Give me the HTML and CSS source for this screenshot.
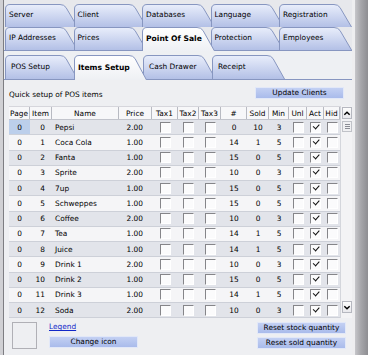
FILE: index.html
```html
<!DOCTYPE html>
<html>
<head>
<meta charset="utf-8">
<link rel="stylesheet" href="styles.css">
</head>
<body>
<svg class="defs" width="0" height="0" aria-hidden="true">
  <defs>
    <linearGradient id="tabg" x1="0" y1="0" x2="0" y2="1">
      <stop offset="0" stop-color="#e9eefb"/>
      <stop offset="1" stop-color="#b3c0e6"/>
    </linearGradient>
    <linearGradient id="tabsel" x1="0" y1="0" x2="0" y2="1">
      <stop offset="0" stop-color="#ffffff"/>
      <stop offset="1" stop-color="#eef0f4"/>
    </linearGradient>
  </defs>
</svg>
<div class="window">
  <div class="main">
    <div class="tabrow">
      <div class="tab"><svg viewBox="0 0 73 23" preserveAspectRatio="none"><path d="M0.5 23 V5 Q0.5 0.5 5 0.5 H55 Q59 0.5 61 3.5 L72.5 23"/></svg><span>Server</span></div>
      <div class="tab"><svg viewBox="0 0 73 23" preserveAspectRatio="none"><path d="M0.5 23 V5 Q0.5 0.5 5 0.5 H55 Q59 0.5 61 3.5 L72.5 23"/></svg><span>Client</span></div>
      <div class="tab"><svg viewBox="0 0 73 23" preserveAspectRatio="none"><path d="M0.5 23 V5 Q0.5 0.5 5 0.5 H55 Q59 0.5 61 3.5 L72.5 23"/></svg><span>Databases</span></div>
      <div class="tab"><svg viewBox="0 0 73 23" preserveAspectRatio="none"><path d="M0.5 23 V5 Q0.5 0.5 5 0.5 H55 Q59 0.5 61 3.5 L72.5 23"/></svg><span>Language</span></div>
      <div class="tab"><svg viewBox="0 0 73 23" preserveAspectRatio="none"><path d="M0.5 23 V5 Q0.5 0.5 5 0.5 H55 Q59 0.5 61 3.5 L72.5 23"/></svg><span>Registration</span></div>
    </div>
    <div class="tabrow">
      <div class="tab"><svg viewBox="0 0 73 23" preserveAspectRatio="none"><path d="M0.5 23 V5 Q0.5 0.5 5 0.5 H55 Q59 0.5 61 3.5 L72.5 23"/></svg><span>IP Addresses</span></div>
      <div class="tab"><svg viewBox="0 0 73 23" preserveAspectRatio="none"><path d="M0.5 23 V5 Q0.5 0.5 5 0.5 H55 Q59 0.5 61 3.5 L72.5 23"/></svg><span>Prices</span></div>
      <div class="tab sel"><svg viewBox="0 0 73 24" preserveAspectRatio="none"><path d="M0.5 24 V5 Q0.5 0.5 5 0.5 H55 Q59 0.5 61 3.5 L72.5 24"/></svg><span>Point Of Sale</span></div>
      <div class="tab"><svg viewBox="0 0 73 23" preserveAspectRatio="none"><path d="M0.5 23 V5 Q0.5 0.5 5 0.5 H55 Q59 0.5 61 3.5 L72.5 23"/></svg><span>Protection</span></div>
      <div class="tab"><svg viewBox="0 0 73 23" preserveAspectRatio="none"><path d="M0.5 23 V5 Q0.5 0.5 5 0.5 H55 Q59 0.5 61 3.5 L72.5 23"/></svg><span>Employees</span></div>
    </div>
    <div class="panel">
      <div class="tabrow sub">
        <div class="tab"><svg viewBox="0 0 73 24" preserveAspectRatio="none"><path d="M0.5 24 V5 Q0.5 0.5 5 0.5 H55 Q59 0.5 61 3.5 L72.5 24"/></svg><span>POS Setup</span></div>
        <div class="tab sel"><svg viewBox="0 0 73 25" preserveAspectRatio="none"><path d="M0.5 25 V5 Q0.5 0.5 5 0.5 H55 Q59 0.5 61 3.5 L72.5 25"/></svg><span>Items Setup</span></div>
        <div class="tab"><svg viewBox="0 0 73 24" preserveAspectRatio="none"><path d="M0.5 24 V5 Q0.5 0.5 5 0.5 H55 Q59 0.5 61 3.5 L72.5 24"/></svg><span>Cash Drawer</span></div>
        <div class="tab"><svg viewBox="0 0 73 24" preserveAspectRatio="none"><path d="M0.5 24 V5 Q0.5 0.5 5 0.5 H55 Q59 0.5 61 3.5 L72.5 24"/></svg><span>Receipt</span></div>
      </div>
      <div class="content">
        <div class="toolbar">
          <span class="title">Quick setup of POS items</span>
          <button class="btn update">Update Clients</button>
        </div>
        <div class="grid">
          <div class="cols">
            <div class="row head">
              <div>Page</div><div>Item</div><div>Name</div><div>Price</div><div>Tax1</div><div>Tax2</div><div>Tax3</div><div>#</div><div>Sold</div><div>Min</div><div>Unl</div><div>Act</div><div>Hid</div>
            </div>
            <div class="row even"><div class="c cur">0</div><div class="r">0</div><div class="l">Pepsi</div><div class="p">2.00</div><div class="k"><span class="cb"></span></div><div class="k"><span class="cb"></span></div><div class="k"><span class="cb"></span></div><div class="c">0</div><div class="c">10</div><div class="c">3</div><div class="k"><span class="cb"></span></div><div class="k"><span class="cb on"></span></div><div class="k"><span class="cb"></span></div></div>
            <div class="row odd"><div class="c">0</div><div class="r">1</div><div class="l">Coca Cola</div><div class="p">1.00</div><div class="k"><span class="cb"></span></div><div class="k"><span class="cb"></span></div><div class="k"><span class="cb"></span></div><div class="c">14</div><div class="c">1</div><div class="c">5</div><div class="k"><span class="cb"></span></div><div class="k"><span class="cb on"></span></div><div class="k"><span class="cb"></span></div></div>
            <div class="row even"><div class="c">0</div><div class="r">2</div><div class="l">Fanta</div><div class="p">1.00</div><div class="k"><span class="cb"></span></div><div class="k"><span class="cb"></span></div><div class="k"><span class="cb"></span></div><div class="c">15</div><div class="c">0</div><div class="c">5</div><div class="k"><span class="cb"></span></div><div class="k"><span class="cb on"></span></div><div class="k"><span class="cb"></span></div></div>
            <div class="row odd"><div class="c">0</div><div class="r">3</div><div class="l">Sprite</div><div class="p">2.00</div><div class="k"><span class="cb"></span></div><div class="k"><span class="cb"></span></div><div class="k"><span class="cb"></span></div><div class="c">10</div><div class="c">0</div><div class="c">3</div><div class="k"><span class="cb"></span></div><div class="k"><span class="cb on"></span></div><div class="k"><span class="cb"></span></div></div>
            <div class="row even"><div class="c">0</div><div class="r">4</div><div class="l">7up</div><div class="p">1.00</div><div class="k"><span class="cb"></span></div><div class="k"><span class="cb"></span></div><div class="k"><span class="cb"></span></div><div class="c">15</div><div class="c">0</div><div class="c">5</div><div class="k"><span class="cb"></span></div><div class="k"><span class="cb on"></span></div><div class="k"><span class="cb"></span></div></div>
            <div class="row odd"><div class="c">0</div><div class="r">5</div><div class="l">Schweppes</div><div class="p">1.00</div><div class="k"><span class="cb"></span></div><div class="k"><span class="cb"></span></div><div class="k"><span class="cb"></span></div><div class="c">15</div><div class="c">0</div><div class="c">5</div><div class="k"><span class="cb"></span></div><div class="k"><span class="cb on"></span></div><div class="k"><span class="cb"></span></div></div>
            <div class="row even"><div class="c">0</div><div class="r">6</div><div class="l">Coffee</div><div class="p">2.00</div><div class="k"><span class="cb"></span></div><div class="k"><span class="cb"></span></div><div class="k"><span class="cb"></span></div><div class="c">10</div><div class="c">0</div><div class="c">3</div><div class="k"><span class="cb"></span></div><div class="k"><span class="cb on"></span></div><div class="k"><span class="cb"></span></div></div>
            <div class="row odd"><div class="c">0</div><div class="r">7</div><div class="l">Tea</div><div class="p">1.00</div><div class="k"><span class="cb"></span></div><div class="k"><span class="cb"></span></div><div class="k"><span class="cb"></span></div><div class="c">14</div><div class="c">1</div><div class="c">5</div><div class="k"><span class="cb"></span></div><div class="k"><span class="cb on"></span></div><div class="k"><span class="cb"></span></div></div>
            <div class="row even"><div class="c">0</div><div class="r">8</div><div class="l">Juice</div><div class="p">1.00</div><div class="k"><span class="cb"></span></div><div class="k"><span class="cb"></span></div><div class="k"><span class="cb"></span></div><div class="c">14</div><div class="c">1</div><div class="c">5</div><div class="k"><span class="cb"></span></div><div class="k"><span class="cb on"></span></div><div class="k"><span class="cb"></span></div></div>
            <div class="row odd"><div class="c">0</div><div class="r">9</div><div class="l">Drink 1</div><div class="p">2.00</div><div class="k"><span class="cb"></span></div><div class="k"><span class="cb"></span></div><div class="k"><span class="cb"></span></div><div class="c">10</div><div class="c">0</div><div class="c">3</div><div class="k"><span class="cb"></span></div><div class="k"><span class="cb on"></span></div><div class="k"><span class="cb"></span></div></div>
            <div class="row even"><div class="c">0</div><div class="r">10</div><div class="l">Drink 2</div><div class="p">1.00</div><div class="k"><span class="cb"></span></div><div class="k"><span class="cb"></span></div><div class="k"><span class="cb"></span></div><div class="c">15</div><div class="c">0</div><div class="c">5</div><div class="k"><span class="cb"></span></div><div class="k"><span class="cb on"></span></div><div class="k"><span class="cb"></span></div></div>
            <div class="row odd"><div class="c">0</div><div class="r">11</div><div class="l">Drink 3</div><div class="p">1.00</div><div class="k"><span class="cb"></span></div><div class="k"><span class="cb"></span></div><div class="k"><span class="cb"></span></div><div class="c">14</div><div class="c">1</div><div class="c">5</div><div class="k"><span class="cb"></span></div><div class="k"><span class="cb on"></span></div><div class="k"><span class="cb"></span></div></div>
            <div class="row even"><div class="c">0</div><div class="r">12</div><div class="l">Soda</div><div class="p">2.00</div><div class="k"><span class="cb"></span></div><div class="k"><span class="cb"></span></div><div class="k"><span class="cb"></span></div><div class="c">10</div><div class="c">0</div><div class="c">3</div><div class="k"><span class="cb"></span></div><div class="k"><span class="cb on"></span></div><div class="k"><span class="cb"></span></div></div>
          </div>
          <div class="vscroll">
            <div class="sbtn"><svg width="9" height="9" viewBox="0 0 9 9"><polyline points="1.5,6 4.5,3 7.5,6" fill="none" stroke="#000" stroke-width="1.6"/></svg></div>
            <div class="thumb"><i></i><i></i><i></i></div>
            <div class="track"></div>
            <div class="sbtn"><svg width="9" height="9" viewBox="0 0 9 9"><polyline points="1.5,3 4.5,6 7.5,3" fill="none" stroke="#000" stroke-width="1.6"/></svg></div>
          </div>
        </div>
        <div class="bottom">
          <div class="bl">
            <div class="iconbox"></div>
            <div class="legend-col">
              <a class="legend" href="#">Legend</a>
              <button class="btn">Change icon</button>
            </div>
          </div>
          <div class="br">
            <button class="btn">Reset stock quantity</button>
            <button class="btn">Reset sold quantity</button>
          </div>
        </div>
      </div>
    </div>
  </div>
  <div class="frame"></div>
</div>
</body>
</html>
```
FILE: styles.css
```css
* { box-sizing: border-box; }

body {
  margin: 0;
  width: 368px;
  height: 355px;
  overflow: hidden;
  font-family: "DejaVu Sans", "Liberation Sans", sans-serif;
  font-size: 7.4px;
  color: #000;
  background: #d0d0d4;
}

.defs { position: absolute; width: 0; height: 0; }

.window {
  display: flex;
  height: 355px;
}

.main {
  flex: 1;
  min-width: 0;
  margin-left: 3px;
  border-left: 1px solid #7d7d82;
  background: #e7e8ec;
  padding-top: 4px;
  display: flex;
  flex-direction: column;
}

.frame {
  width: 16px;
  flex: none;
  background: linear-gradient(to right, #eeeef0 0, #eeeef0 3px, #c6c6ca 3px, #a6a6aa 9px, #8e8e92 16px);
}

/* tabs */
.tabrow {
  display: flex;
  height: 23px;
  padding-left: 1px;
}

.tab {
  position: relative;
  flex: none;
  width: 73px;
  height: 23px;
  margin-right: -4.5px;
}

.tab svg {
  position: absolute;
  left: 0;
  top: 0;
  width: 100%;
  height: 100%;
}

.tab path {
  fill: url(#tabg);
  stroke: #8796c0;
  stroke-width: 1;
  vector-effect: non-scaling-stroke;
}

.tab span {
  position: relative;
  display: block;
  padding-left: 4px;
  line-height: 22px;
  white-space: nowrap;
}

.tab.sel {
  z-index: 2;
  height: 24px;
}

.tab.sel path { fill: url(#tabsel); }

.tab.sel span {
  font-weight: bold;
  font-size: 7.6px;
  line-height: 24px;
}

.panel {
  flex: 1;
  display: flex;
  flex-direction: column;
  border-top: 1px solid #8796c0;
  background: #eef0f3;
  padding-top: 4px;
}

.tabrow.sub { height: 24px; }
.tabrow.sub .tab { height: 24px; margin-right: -4px; }
.tabrow.sub .tab span { line-height: 24px; padding-left: 6px; }
.tabrow.sub .tab.sel { height: 25px; }
.tabrow.sub .tab.sel span { line-height: 26px; padding-left: 4px; }

.content {
  flex: 1;
  border-top: 1px solid #8796c0;
  background: #eeeff2;
  padding-left: 5px;
}

/* toolbar */
.toolbar {
  display: flex;
  justify-content: space-between;
  align-items: flex-start;
  height: 19px;
  padding-top: 7px;
}

.title {
  padding-top: 3px;
  line-height: 10px;
  white-space: nowrap;
}

.btn {
  display: block;
  width: 89px;
  height: 12px;
  padding: 0;
  margin: 0;
  font: inherit;
  line-height: 10px;
  color: #000;
  text-align: center;
  border: 1px solid #e2e8f8;
  background: linear-gradient(#c3d0f3, #a9bbeb);
}

.update { margin-right: 8px; }

/* grid */
.grid {
  display: flex;
  margin-top: 7px;
  width: 343px;
}

.cols {
  width: 331px;
  flex: none;
}

.row {
  display: grid;
  grid-template-columns: 21px 22px 67px 33px 26px 21px 22px 26px 22px 20px 18px 17px 16px;
  height: 15.25px;
  align-items: stretch;
  border-bottom: 1px solid #cdd0d8;
  white-space: nowrap;
}

.row > div {
  display: flex;
  align-items: center;
}

.row.head {
  height: 14px;
  background: #f7f7f9;
  border-top: 1px solid #d6d6dc;
  border-bottom: 1px solid #c2c4cc;
}

.row.head > div {
  justify-content: center;
  border-right: 1px solid #b8bac2;
}

.row.even { background: #e2e4ea; }
.row.odd { background: #f5f5f7; }

.c { justify-content: center; }
.r { justify-content: flex-end; padding-right: 7px; }
.l { padding-left: 3px; }
.p { justify-content: flex-end; padding-right: 9px; }
.k { justify-content: center; }
.cur { background: #bccfeb; }

.cb {
  position: relative;
  width: 11px;
  height: 11px;
  border-top: 1px solid #858589;
  border-left: 1px solid #858589;
  border-right: 1px solid #ffffff;
  border-bottom: 1px solid #ffffff;
  background: #fbfbfc;
}

.cb.on::after {
  content: "";
  position: absolute;
  left: 2px;
  top: 1px;
  width: 5px;
  height: 2.5px;
  border-left: 1.6px solid #111;
  border-bottom: 1.6px solid #111;
  transform: rotate(-48deg);
}

/* scrollbar */
.vscroll {
  width: 12px;
  flex: none;
  display: flex;
  flex-direction: column;
  padding: 1px 0 5px 1px;
  background: #f3f3f5;
  border-left: 1px solid #d4d6dc;
}

.sbtn {
  height: 12px;
  display: flex;
  align-items: center;
  justify-content: center;
  border: 1px solid #b6b8c0;
  background: linear-gradient(#fdfdfd, #e8e8ec);
}

.thumb {
  height: 11px;
  margin-top: 2px;
  border: 1px solid #c0c2c8;
  background: #f0f0f2;
  display: flex;
  flex-direction: column;
  align-items: center;
  justify-content: center;
  gap: 1px;
}

.thumb i {
  display: block;
  width: 5px;
  height: 1px;
  background: #8a8c94;
}

.track { flex: 1; }

/* bottom */
.bottom {
  display: flex;
  justify-content: space-between;
  padding-top: 4px;
}

.bl {
  display: flex;
  gap: 12px;
  padding-left: 3px;
}

.iconbox {
  width: 25px;
  height: 27px;
  border: 1px solid #b0b0b6;
  background: #eeeff2;
}

.legend-col {
  display: flex;
  flex-direction: column;
  gap: 4px;
}

.legend {
  line-height: 10px;
  color: #1228c8;
  text-decoration: underline;
}

.br {
  display: flex;
  flex-direction: column;
  gap: 3px;
  margin-right: 6px;
}
```
